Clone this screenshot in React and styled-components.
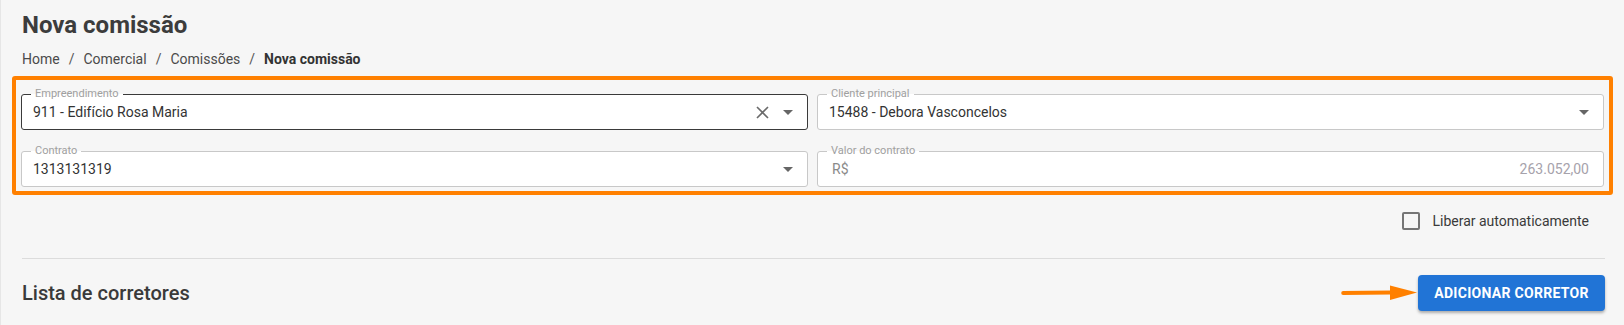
import React from 'react';
import styled, { createGlobalStyle } from 'styled-components';

const Global = createGlobalStyle`
  body {
    margin: 0;
    background: #f6f6f6;
    font-family: Roboto, "Liberation Sans", Arial, sans-serif;
  }
`;

const Pagina = styled.div`
  width: 1624px;
  height: 325px;
  box-sizing: border-box;
  padding: 11px 19px 0 21px;
  border-left: 1px solid #e6e6e6;
  background: #f6f6f6;
  overflow: hidden;
`;

const Titulo = styled.h1`
  margin: 0;
  font-size: 24px;
  font-weight: 700;
  color: #3c3c3c;
  line-height: 29px;
`;

const Migalhas = styled.nav`
  display: flex;
  align-items: center;
  margin-top: 11px;
  font-size: 14px;
  line-height: 17px;
  color: #4a4a4a;
`;

const Migalha = styled.span`
  font-weight: ${p => (p.$atual ? 700 : 400)};
  color: ${p => (p.$atual ? '#333' : '#4a4a4a')};
`;

const Barra = styled.span`
  margin: 0 9px;
  color: #555;
`;

const Destaque = styled.div`
  margin: 8px -8px 0 -10px;
  padding: 14px 5px 4px 5px;
  border: 4px solid #ff8000;
  border-radius: 3px;
  display: grid;
  grid-template-columns: 1fr 1fr;
  column-gap: 9px;
  row-gap: 21px;
`;

const Campo = styled.div`
  position: relative;
  height: 36px;
  box-sizing: border-box;
  background: #fff;
  border: 1px solid ${p => (p.$focado ? '#3a3a3a' : '#c8c8c8')};
  border-radius: 3px;
  display: flex;
  align-items: center;
  padding: 0 14px 0 ${p => p.$esq || 11}px;
`;

const Rotulo = styled.label`
  position: absolute;
  top: -8px;
  left: 9px;
  padding: 0 4px;
  font-size: 11px;
  line-height: 14px;
  color: #a0a0a0;
  background: linear-gradient(to bottom, #f6f6f6 50%, #fff 50%);
`;

const Valor = styled.span`
  flex: 1;
  font-size: 14px;
  color: ${p => p.$cor || '#333'};
  text-align: ${p => p.$alinha || 'left'};
`;

const Icones = styled.div`
  display: flex;
  align-items: center;
  gap: 14px;
`;

const LinhaCheck = styled.div`
  display: flex;
  justify-content: flex-end;
  align-items: center;
  gap: 12px;
  margin-top: 16px;
  padding-right: 16px;
  height: 20px;
`;

const Caixa = styled.span`
  width: 14px;
  height: 14px;
  border: 2px solid #757575;
  border-radius: 2px;
`;

const TextoCheck = styled.span`
  font-size: 14px;
  color: #3a3a3a;
`;

const Divisor = styled.hr`
  margin: 27px 0 0 0;
  border: 0;
  border-top: 1px solid #dcdcdc;
`;

const Secao = styled.div`
  display: flex;
  align-items: center;
  justify-content: space-between;
  margin-top: 16px;
`;

const Subtitulo = styled.h2`
  margin: 0;
  font-size: 20px;
  font-weight: 500;
  color: #3a3a3a;
`;

const Acoes = styled.div`
  display: flex;
  align-items: center;
`;

const Botao = styled.button`
  width: 187px;
  height: 36px;
  border: 0;
  border-radius: 4px;
  background: #2174d6;
  color: #fff;
  font-family: inherit;
  font-size: 14px;
  font-weight: 700;
  letter-spacing: 0.3px;
  box-shadow: 0 2px 3px rgba(0, 0, 0, 0.3);
`;

const Seta = () => (
  <svg width="10" height="5" viewBox="0 0 10 5">
    <path d="M0 0 L10 0 L5 5 Z" fill="#666" />
  </svg>
);

const Fechar = () => (
  <svg width="13" height="13" viewBox="0 0 13 13">
    <path d="M1 1 L12 12 M12 1 L1 12" stroke="#6a6a6a" strokeWidth="1.6" />
  </svg>
);

const SetaLaranja = () => (
  <svg width="77" height="18" viewBox="0 0 77 18">
    <path d="M2 7 L50 6.5 L50 10.5 L2 11 Z" fill="#ff8000" />
    <circle cx="2.2" cy="9" r="2" fill="#ff8000" />
    <path d="M49 1.5 L76 8.5 L49 16 Z" fill="#ff8000" />
  </svg>
);

export default function App() {
  return (
    <>
      <Global />
      <Pagina>
        <Titulo>Nova comissão</Titulo>
        <Migalhas>
          <Migalha>Home</Migalha>
          <Barra>/</Barra>
          <Migalha>Comercial</Migalha>
          <Barra>/</Barra>
          <Migalha>Comissões</Migalha>
          <Barra>/</Barra>
          <Migalha $atual>Nova comissão</Migalha>
        </Migalhas>

        <Destaque>
          <Campo $focado>
            <Rotulo>Empreendimento</Rotulo>
            <Valor>911 - Edifício Rosa Maria</Valor>
            <Icones>
              <Fechar />
              <Seta />
            </Icones>
          </Campo>
          <Campo>
            <Rotulo>Cliente principal</Rotulo>
            <Valor>15488 - Debora Vasconcelos</Valor>
            <Icones>
              <Seta />
            </Icones>
          </Campo>
          <Campo>
            <Rotulo>Contrato</Rotulo>
            <Valor>1313131319</Valor>
            <Icones>
              <Seta />
            </Icones>
          </Campo>
          <Campo $esq={14}>
            <Rotulo>Valor do contrato</Rotulo>
            <Valor $cor="#8a8a8a" style={{ flex: 'none' }}>R$</Valor>
            <Valor $cor="#a6a2ab" $alinha="right">263.052,00</Valor>
          </Campo>
        </Destaque>

        <LinhaCheck>
          <Caixa />
          <TextoCheck>Liberar automaticamente</TextoCheck>
        </LinhaCheck>

        <Divisor />

        <Secao>
          <Subtitulo>Lista de corretores</Subtitulo>
          <Acoes>
            <SetaLaranja />
            <Botao>ADICIONAR CORRETOR</Botao>
          </Acoes>
        </Secao>
      </Pagina>
    </>
  );
}
